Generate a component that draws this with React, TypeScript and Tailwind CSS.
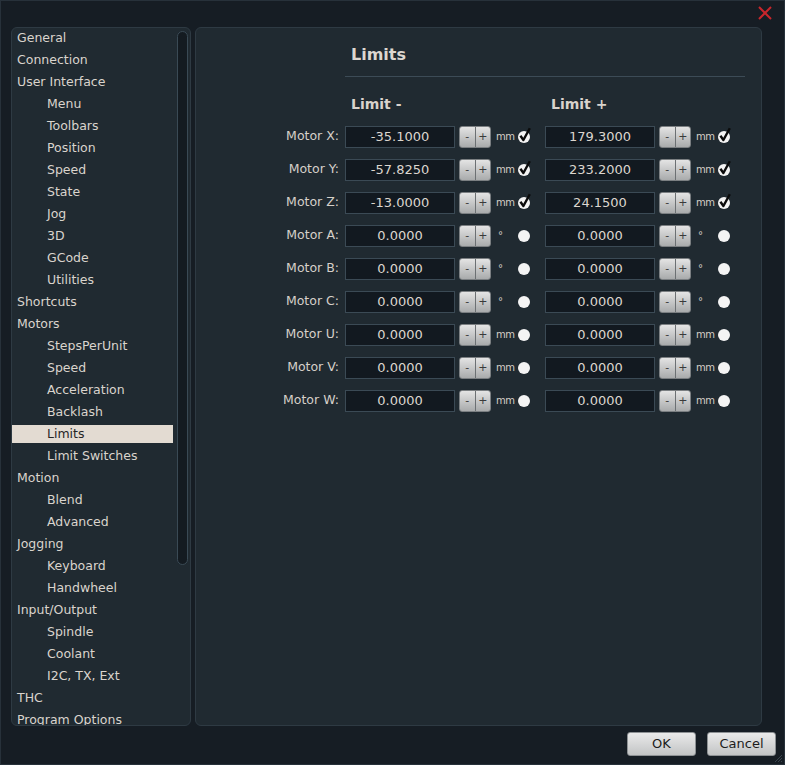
import React from 'react';

const NAV = [
  { label: 'General', level: 0 },
  { label: 'Connection', level: 0 },
  { label: 'User Interface', level: 0 },
  { label: 'Menu', level: 1 },
  { label: 'Toolbars', level: 1 },
  { label: 'Position', level: 1 },
  { label: 'Speed', level: 1 },
  { label: 'State', level: 1 },
  { label: 'Jog', level: 1 },
  { label: '3D', level: 1 },
  { label: 'GCode', level: 1 },
  { label: 'Utilities', level: 1 },
  { label: 'Shortcuts', level: 0 },
  { label: 'Motors', level: 0 },
  { label: 'StepsPerUnit', level: 1 },
  { label: 'Speed', level: 1 },
  { label: 'Acceleration', level: 1 },
  { label: 'Backlash', level: 1 },
  { label: 'Limits', level: 1, selected: true },
  { label: 'Limit Switches', level: 1 },
  { label: 'Motion', level: 0 },
  { label: 'Blend', level: 1 },
  { label: 'Advanced', level: 1 },
  { label: 'Jogging', level: 0 },
  { label: 'Keyboard', level: 1 },
  { label: 'Handwheel', level: 1 },
  { label: 'Input/Output', level: 0 },
  { label: 'Spindle', level: 1 },
  { label: 'Coolant', level: 1 },
  { label: 'I2C, TX, Ext', level: 1 },
  { label: 'THC', level: 0 },
  { label: 'Program Options', level: 0 },
];

type Limit = { value: string; unit: string; on: boolean };

const MOTORS: { name: string; min: Limit; max: Limit }[] = [
  { name: 'X', min: { value: '-35.1000', unit: 'mm', on: true }, max: { value: '179.3000', unit: 'mm', on: true } },
  { name: 'Y', min: { value: '-57.8250', unit: 'mm', on: true }, max: { value: '233.2000', unit: 'mm', on: true } },
  { name: 'Z', min: { value: '-13.0000', unit: 'mm', on: true }, max: { value: '24.1500', unit: 'mm', on: true } },
  { name: 'A', min: { value: '0.0000', unit: '°', on: false }, max: { value: '0.0000', unit: '°', on: false } },
  { name: 'B', min: { value: '0.0000', unit: '°', on: false }, max: { value: '0.0000', unit: '°', on: false } },
  { name: 'C', min: { value: '0.0000', unit: '°', on: false }, max: { value: '0.0000', unit: '°', on: false } },
  { name: 'U', min: { value: '0.0000', unit: 'mm', on: false }, max: { value: '0.0000', unit: 'mm', on: false } },
  { name: 'V', min: { value: '0.0000', unit: 'mm', on: false }, max: { value: '0.0000', unit: 'mm', on: false } },
  { name: 'W', min: { value: '0.0000', unit: 'mm', on: false }, max: { value: '0.0000', unit: 'mm', on: false } },
];

const CheckDot: React.FC<{ on: boolean }> = ({ on }) => (
  <svg width="14" height="16" viewBox="0 0 14 16" className="-mt-[3px]">
    <circle cx="6" cy="10" r="6" fill="#f4f4f4" />
    {on && <path d="M2.4 8.8 L5.4 13 L11.8 1.2" fill="none" stroke="#0b0b0b" strokeWidth="2.4" strokeLinejoin="round" />}
  </svg>
);

const SpinButtons: React.FC = () => (
  <div className="flex h-[22px] w-[32px] overflow-hidden rounded-[3px] border border-[#7b7f82] bg-gradient-to-b from-[#e4e4e4] to-[#a9abac] text-[11px] leading-none text-[#3a3a3a]">
    <div className="flex flex-1 items-center justify-center border-r border-[#6c7073]">-</div>
    <div className="flex flex-1 items-center justify-center">+</div>
  </div>
);

const LimitField: React.FC<{ limit: Limit }> = ({ limit }) => (
  <div className="flex w-[200px] items-center">
    <div className="flex h-[22px] w-[110px] items-center justify-center border border-[#3b4a55] bg-[#121920] text-[13px] text-[#dcd6cf]">
      {limit.value}
    </div>
    <div className="ml-[4px]">
      <SpinButtons />
    </div>
    <div
      className={`ml-[5px] w-[22px] text-[#d4cec7] ${
        limit.unit === 'mm' ? 'text-[10px] tracking-[-0.5px]' : 'pl-[2px] text-[10px]'
      }`}
    >
      {limit.unit}
    </div>
    <CheckDot on={limit.on} />
  </div>
);

const Sidebar: React.FC = () => (
  <div className="flex h-full w-[180px] shrink-0 overflow-hidden rounded-[6px] border border-[#2e3a43] bg-[#202a31]">
    <div className="-mt-[1px] w-[161px] shrink-0">
      {NAV.map((item, i) => (
        <div key={i} className="flex h-[22px] items-center">
          <div
            className={`flex h-[18px] w-full items-center text-[12.5px] ${item.level ? 'pl-[35px]' : 'pl-[5px]'} ${
              item.selected ? 'bg-[#e3dbd2] text-[#262626]' : 'text-[#dad4cd]'
            }`}
          >
            {item.label}
          </div>
        </div>
      ))}
    </div>
    <div className="ml-[4px] pt-[3px]">
      <div className="h-[534px] w-[11px] rounded-full border border-[#3a4a55] bg-[#141b21]" />
    </div>
  </div>
);

const LimitsPanel: React.FC = () => (
  <div className="h-full flex-1 rounded-[6px] border border-[#2e3a43] bg-[#202a31] pl-[149px] pr-[16px] pt-[17px]">
    <div className="pl-[6px] text-[16px] font-bold leading-[20px] text-[#ddd7d0]">Limits</div>
    <div className="mt-[11px] h-px bg-[#3c4b56]" />
    <div className="mt-[18px] flex text-[14px] font-bold leading-[18px] text-[#d9d3cc]">
      <div className="w-[200px] pl-[6px]">Limit -</div>
      <div className="w-[200px] pl-[6px]">Limit +</div>
    </div>
    <div className="-ml-[149px] mt-[7px]">
      {MOTORS.map(m => (
        <div key={m.name} className="flex h-[33px] items-center">
          <div className="w-[143px] text-right text-[12.5px] text-[#d6d0c9]">Motor {m.name}:</div>
          <div className="ml-[6px] flex">
            <LimitField limit={m.min} />
            <LimitField limit={m.max} />
          </div>
        </div>
      ))}
    </div>
  </div>
);

const DialogButton: React.FC<{ label: string }> = ({ label }) => (
  <button className="h-[24px] w-[69px] rounded-[3px] border border-[#8d9194] bg-gradient-to-b from-[#eaeaea] to-[#c2c4c5] text-[13px] text-[#1c1c1c]">
    {label}
  </button>
);

export default function App() {
  return (
    <div
      className="relative flex h-[765px] w-[785px] flex-col overflow-hidden border border-[#27313a] bg-[#161d24]"
      style={{ fontFamily: '"DejaVu Sans", Verdana, sans-serif' }}
    >
      <div className="flex h-[26px] shrink-0 items-start justify-end pr-[12px] pt-[5px]">
        <svg width="14" height="14" viewBox="0 0 14 14">
          <path d="M1 1 L13 13 M13 1 L1 13" stroke="#c8262c" strokeWidth="2" />
        </svg>
      </div>
      <div className="flex h-[699px] shrink-0 gap-[4px] pl-[10px] pr-[23px]">
        <Sidebar />
        <LimitsPanel />
      </div>
      <div className="mt-[6px] flex justify-end gap-[11px] pr-[8px]">
        <DialogButton label="OK" />
        <DialogButton label="Cancel" />
      </div>
      <svg width="10" height="10" viewBox="0 0 10 10" className="absolute bottom-[1px] right-[1px]">
        <path d="M9 2 L2 9 M9 5 L5 9 M9 8 L8 9" stroke="#3a454e" strokeWidth="1" />
      </svg>
    </div>
  );
}
